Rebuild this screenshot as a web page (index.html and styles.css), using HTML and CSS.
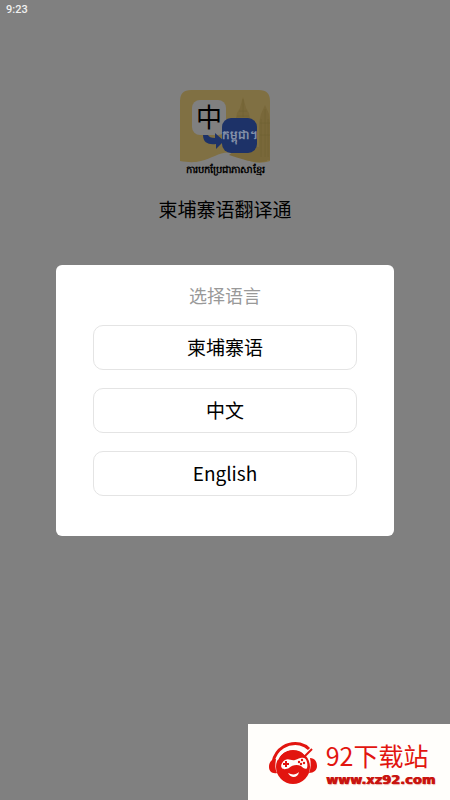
FILE: index.html
```
<!DOCTYPE html>
<html lang="zh">
  <head>
    <meta charset="utf-8">
    <meta name="viewport" content="width=device-width, initial-scale=1">
    <title>柬埔寨语翻译通</title>
    <link rel="stylesheet" href="styles.css">
  </head>
  <body>
    <header class="status-bar">9:23</header>

    <main class="splash">
      <svg class="app-icon" viewBox="0 0 92 88" role="img" aria-label="柬埔寨语翻译通">
        <path d="M1 72V12Q1 1 12 1H80Q91 1 91 12V72C78 76 68 72 60 67C46 58 36 69 22 72C14 74 8 73 1 72Z" fill="#807043" />
        <!-- temple towers -->
        <g fill="#79683a">
          <path d="M56 34L58 24L61 19L64 8L67 19L70 24L72 34Z" />
          <path d="M80 71V34L82 25L86 16L90 25L91 34V71Z" />
          <path d="M50 66L60 58H88V72C76 75 66 71 50 66Z" />
        </g>
        <path d="M64 10V28M60 22H68M58 27H70M82 30V68M86 20V68M89 30V68M81 34H91M81 46H91" fill="none" stroke="#6e6034" opacity="0.6" />
        <rect x="13" y="11" width="34" height="35" rx="8" fill="#808080" />
        <rect x="43" y="29" width="35" height="35" rx="9" fill="#1d3268" />
        <path d="M24 46H29C30 48 32 49 36 49V44L45 52L37 60V55C30 56 24 54 24 46Z" fill="#1d3268" />
        <text class="icon-zh" x="30" y="38">中</text>
        <text class="icon-km" x="61" y="50">កម្ពុជា។</text>
        <text class="icon-caption" x="46" y="84">ការបកប្រែជាភាសាខ្មែរ</text>
      </svg>
      <h1 class="app-name">柬埔寨语翻译通</h1>
    </main>

    <div class="backdrop">
      <section class="dialog" role="dialog" aria-labelledby="dialog-title">
        <h2 class="dialog-title" id="dialog-title">选择语言</h2>
        <div class="language-list">
          <button type="button" class="language">柬埔寨语</button>
          <button type="button" class="language">中文</button>
          <button type="button" class="language">English</button>
        </div>
      </section>
    </div>

    <aside class="site-badge">
      <svg class="site-logo" viewBox="0 0 50 44" aria-hidden="true">
        <circle cx="25" cy="25" r="17" fill="#e2150f" />
        <path d="M5 20C8 6 20 0 32 2C36 3 39 5 41 7" fill="none" stroke="#e2150f" stroke-width="3" />
        <path d="M8 17C3 17 1 21 1 25C1 29 4 32 9 31C7 27 7 23 8 17Z" fill="#e2150f" />
        <path d="M42 16C47 16 49 20 49 24C49 28 46 31 41 31C43 26 43 21 42 16Z" fill="#e2150f" />
        <path d="M9 18C13 8 24 4 33 8L38 13" fill="none" stroke="#fffefb" stroke-width="2" />
        <path d="M36 15L44 7" stroke="#e2150f" stroke-width="2" />
        <path d="M17 18C21 16 23 19 27 18C31 17 32 15 36 16C39 17 40 23 39 26C38 28 35 26 33 24C29 22 24 23 21 26C19 27 15 28 14 26C12 24 14 20 17 18Z" fill="#fffefb" />
        <path d="M15 22H21M18 19V25" stroke="#e2150f" stroke-width="2" />
        <g fill="#e2150f">
          <circle cx="31" cy="20" r="1.2" />
          <circle cx="34" cy="18" r="1.2" />
          <circle cx="33" cy="22" r="1.2" />
          <circle cx="36" cy="21" r="1.2" />
        </g>
        <path d="M20 31C24 33 28 33 31 30C30 36 23 37 20 31Z" fill="#fffefb" />
      </svg>
      <div class="site-text">
        <span class="site-name">92下载站</span>
        <a class="site-link" href="#">www.xz92.com</a>
      </div>
    </aside>
  </body>
</html>
```
FILE: styles.css
```
* {
  box-sizing: border-box;
}

body {
  margin: 0;
  min-height: 100vh;
  background: #808080;
  color: #000;
  font-family: "Noto Sans CJK SC", sans-serif;
}

.status-bar {
  padding: 3px 6px;
  color: #f0f0f0;
  font-family: Roboto, sans-serif;
  font-size: 11px;
  font-weight: 500;
  line-height: 14px;
}

.splash {
  display: flex;
  flex-direction: column;
  align-items: center;
  gap: 18px;
  padding-top: 69px;
}

.app-icon {
  width: 92px;
  height: 88px;
}

.app-icon text {
  text-anchor: middle;
}

.icon-zh {
  font-size: 26px;
}

.icon-km {
  fill: #8490a8;
  font-size: 12px;
  font-weight: 700;
}

.icon-caption {
  font-size: 10px;
  font-weight: 700;
}

.app-name {
  margin: 0;
  font-size: 19px;
  font-weight: 400;
  line-height: 28px;
}

.backdrop {
  position: fixed;
  inset: 0;
  display: flex;
  align-items: center;
  justify-content: center;
}

.dialog {
  width: 75%;
  padding: 16px 37px 40px;
  border-radius: 6px;
  background: #fff;
}

.dialog-title {
  margin: 0 0 16px;
  color: #999;
  font-size: 18px;
  font-weight: 400;
  line-height: 28px;
  text-align: center;
}

.language-list {
  display: flex;
  flex-direction: column;
  gap: 18px;
}

.language {
  height: 45px;
  padding: 0 0 2px;
  border: 1px solid #e4e4e4;
  border-radius: 10px;
  background: #fff;
  color: #000;
  font-family: inherit;
  font-size: 19px;
  cursor: pointer;
}

.site-badge {
  position: fixed;
  right: 0;
  bottom: 0;
  display: flex;
  align-items: center;
  gap: 8px;
  padding: 15px 15px 11px 20px;
  background: #fffefb;
}

.site-logo {
  width: 50px;
  height: 44px;
}

.site-text {
  display: flex;
  flex-direction: column;
}

.site-name {
  color: #e2150f;
  font-size: 25px;
  font-weight: 400;
  line-height: 32px;
}

.site-link {
  color: #c9140f;
  font-family: "DejaVu Sans", sans-serif;
  font-size: 13px;
  font-weight: 700;
  line-height: 18px;
  text-decoration: none;
  text-shadow: 1px 0 0 #c9140f, 1px 1px 1px #e8a9a4;
}
```
